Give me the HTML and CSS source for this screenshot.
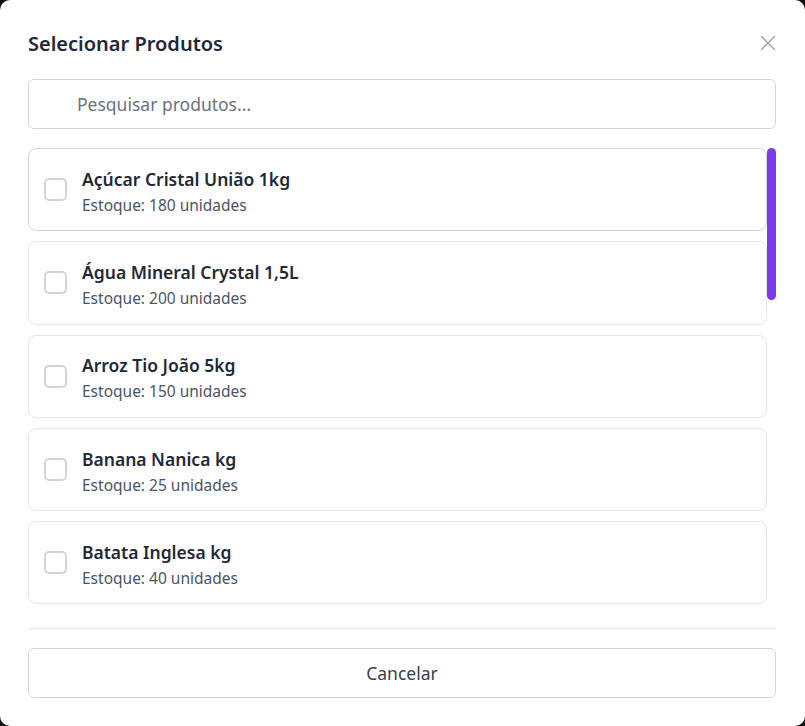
FILE: index.html
```html
<!DOCTYPE html>
<html lang="pt-BR">
<head>
<meta charset="utf-8">
<title>Selecionar Produtos</title>
<link rel="stylesheet" href="styles.css">
</head>
<body>
<div class="modal">
  <div class="header">
    <h2 class="title">Selecionar Produtos</h2>
    <button class="close" aria-label="Fechar">
      <svg width="16" height="16" viewBox="0 0 16 16"><path d="M1.5 1.5 L14.5 14.5 M14.5 1.5 L1.5 14.5" stroke="#9ca3af" stroke-width="1.4" fill="none" stroke-linecap="round"/></svg>
    </button>
  </div>
  <div class="search">
    <input class="search-input" type="text" placeholder="Pesquisar produtos...">
  </div>
  <div class="list-area">
    <div class="list">
      <label class="item item-hover"><span class="check"></span><span class="info"><span class="name">Açúcar Cristal União 1kg</span><span class="stock">Estoque: 180 unidades</span></span></label>
      <label class="item"><span class="check"></span><span class="info"><span class="name">Água Mineral Crystal 1,5L</span><span class="stock">Estoque: 200 unidades</span></span></label>
      <label class="item"><span class="check"></span><span class="info"><span class="name">Arroz Tio João 5kg</span><span class="stock">Estoque: 150 unidades</span></span></label>
      <label class="item"><span class="check"></span><span class="info"><span class="name">Banana Nanica kg</span><span class="stock">Estoque: 25 unidades</span></span></label>
      <label class="item"><span class="check"></span><span class="info"><span class="name">Batata Inglesa kg</span><span class="stock">Estoque: 40 unidades</span></span></label>
    </div>
    <div class="scrollbar"><div class="thumb"></div></div>
  </div>
  <div class="footer">
    <button class="cancel">Cancelar</button>
  </div>
</div>
</body>
</html>
```

FILE: styles.css
```css
* { box-sizing: border-box; }
html, body { margin: 0; padding: 0; }
body {
  background: #111;
  font-family: "Noto Sans", "Open Sans", sans-serif;
  width: 805px;
  height: 726px;
  overflow: hidden;
}
.modal {
  width: 805px;
  height: 726px;
  background: #fff;
  border-radius: 10px;
  padding: 28px 29px 28px 28px;
  display: flex;
  flex-direction: column;
}
.header {
  height: 30px;
  display: flex;
  align-items: center;
  justify-content: space-between;
  margin-bottom: 21px;
}
.title {
  margin: 0;
  font-size: 20px;
  font-weight: 600;
  color: #1f2937;
}
.close {
  background: none;
  border: 0;
  padding: 0;
  width: 16px;
  height: 16px;
  display: flex;
}
.search { margin-bottom: 19px; }
.search-input {
  width: 100%;
  height: 50px;
  border: 1px solid #d1d5db;
  border-radius: 6px;
  padding: 0 16px 0 48px;
  font-family: inherit;
  font-size: 17.5px;
  color: #374151;
  outline: none;
}
.search-input::placeholder { color: #6b7280; }
.list-area {
  height: 464px;
  display: flex;
}
.list {
  flex: 1;
  overflow: hidden;
  display: flex;
  flex-direction: column;
  gap: 10px;
}
.scrollbar {
  width: 9px;
  flex: 0 0 9px;
}
.thumb {
  height: 152px;
  background: #7c3aed;
  border-radius: 5px;
}
.item {
  flex: 0 0 83.3px;
  border: 1px solid #e5e7eb;
  border-radius: 8px;
  display: flex;
  align-items: center;
  padding: 0 16px 0 15px;
  gap: 15px;
  cursor: pointer;
}
.item-hover { border-color: #d1d5db; }
.check {
  width: 23px;
  height: 23px;
  border: 2px solid #d1d5db;
  border-radius: 5px;
  flex: 0 0 auto;
}
.info {
  display: flex;
  flex-direction: column;
  gap: 4px;
  padding-top: 4px;
}
.name {
  font-size: 17.5px;
  font-weight: 600;
  color: #1f2937;
  line-height: 23px;
}
.stock {
  font-size: 15.5px;
  color: #4b5563;
  line-height: 21px;
}
.footer {
  margin-top: 16px;
  border-top: 1px solid #e5e7eb;
  padding-top: 19px;
}
.cancel {
  width: 100%;
  height: 50px;
  background: #fff;
  border: 1px solid #d1d5db;
  border-radius: 6px;
  font-family: inherit;
  font-size: 17.5px;
  color: #374151;
  cursor: pointer;
}
```
